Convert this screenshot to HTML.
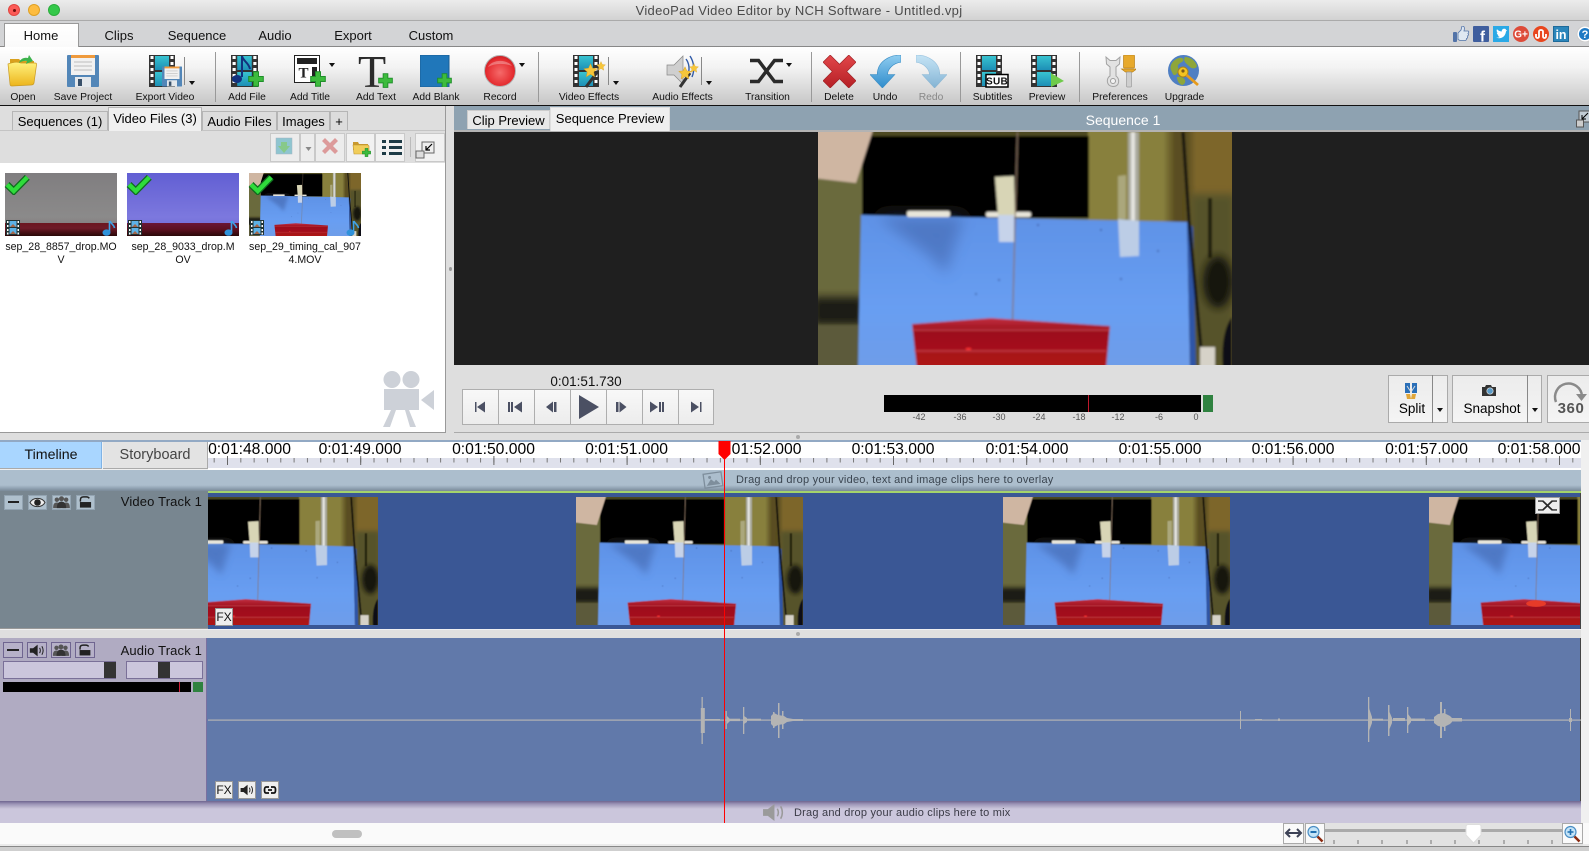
<!DOCTYPE html>
<html><head><meta charset="utf-8"><title>VideoPad Video Editor</title>
<style>
html,body{margin:0;padding:0;width:1589px;height:851px;overflow:hidden;background:#dedede;font-family:"Liberation Sans",sans-serif;color:#000}
div,svg,span{position:absolute;box-sizing:border-box}
svg{overflow:hidden}
.t{white-space:nowrap;transform:translateX(-50%);text-align:center}
.tb{top:92px;font-size:10.3px;line-height:12px;color:#111}
.mt{top:28px;font-size:13px;line-height:16px;color:#111}
.sep{top:52px;width:1px;height:50px;background:#999}
.arr{width:0;height:0;border-left:3.5px solid transparent;border-right:3.5px solid transparent;border-top:4px solid #111}
.lt{top:111px;height:19px;background:#dcdcdc;border:1px solid #b5b5b5;border-bottom:0;font-size:13px;line-height:19px;text-align:center;white-space:nowrap}
.fn{font-size:10.6px;line-height:13px;text-align:center;width:124px;top:241px;color:#111}
.tm{top:441px;font-size:15.7px;line-height:18px;color:#000}
.mtk{top:411px;font-size:9px;line-height:12px;color:#555}
.vb{top:495px;width:19px;height:15px;background:#afc0cd;border:1px solid #93a4b2}
.ab{top:642px;width:20px;height:16px;background:#b6b1c8;border:1px solid #6f6590}
.tbtn{top:133px;height:29px;border:1px solid #c9c9c9;background:#ececec}
.sl{top:661px;height:18px;background:#cbc6dc;border:1px solid #7a7098}
.small{background:#eee;border:1px solid #999;font-size:12px;line-height:16px;text-align:center;color:#111}
</style></head><body>
<svg width="0" height="0" style="left:0;top:0">
<defs>
<linearGradient id="teal" x1="0" y1="0" x2="0" y2="1"><stop offset="0" stop-color="#38c3d0"/><stop offset="1" stop-color="#1d8fb6"/></linearGradient>
<linearGradient id="bl" x1="0" y1="0" x2="0" y2="1"><stop offset="0" stop-color="#5f92e6"/><stop offset=".6" stop-color="#689ef2"/><stop offset="1" stop-color="#6f9de8"/></linearGradient>
<linearGradient id="rb" x1="0" y1="0" x2="0" y2="1"><stop offset="0" stop-color="#c23040"/><stop offset=".25" stop-color="#9c0f1c"/><stop offset="1" stop-color="#b01418"/></linearGradient>
<linearGradient id="rr" x1="0" y1="0" x2="1" y2="0"><stop offset="0" stop-color="#88803e"/><stop offset=".5" stop-color="#88803e"/><stop offset=".58" stop-color="#5a4e20"/><stop offset=".66" stop-color="#5a4e20"/><stop offset=".72" stop-color="#7d662c"/><stop offset="1" stop-color="#7d662c"/></linearGradient>
<linearGradient id="yl" x1="0" y1="0" x2="0" y2="1"><stop offset="0" stop-color="#fff27e"/><stop offset="1" stop-color="#ecb41c"/></linearGradient>
<linearGradient id="red" x1="0" y1="0" x2="0" y2="1"><stop offset="0" stop-color="#e2474a"/><stop offset="1" stop-color="#b51f25"/></linearGradient>
<linearGradient id="blu" x1="0" y1="0" x2="0" y2="1"><stop offset="0" stop-color="#8fcdf0"/><stop offset="1" stop-color="#2f8ccc"/></linearGradient>
<radialGradient id="rec" cx=".5" cy=".55" r=".55"><stop offset="0" stop-color="#f56a6a"/><stop offset=".8" stop-color="#e42b2f"/><stop offset="1" stop-color="#c72025"/></radialGradient>
<filter id="bf" x="-5%" y="-5%" width="110%" height="110%"><feGaussianBlur stdDeviation="1"/></filter>
<filter id="bs" x="-30%" y="-30%" width="160%" height="160%"><feGaussianBlur stdDeviation="7"/></filter>
<filter id="bm" x="-30%" y="-30%" width="160%" height="160%"><feGaussianBlur stdDeviation="4"/></filter>
<symbol id="ph" viewBox="0 0 414 233" preserveAspectRatio="none">
<g filter="url(#bf)">
<rect x="-5" y="-5" width="424" height="243" fill="#6b6a3c"/>
<rect x="270" y="-5" width="150" height="243" fill="url(#rr)"/>
<rect x="372" y="62" width="45" height="176" fill="#56532c" filter="url(#bm)"/>
<rect x="-5" y="165" width="50" height="28" fill="#1c1c12" filter="url(#bm)"/>
<rect x="-5" y="193" width="50" height="45" fill="#5c5a3a"/>
<rect x="45" y="-5" width="225" height="9" fill="#4d4822"/>
<rect x="44" y="4" width="227" height="82" fill="#060503"/>
<polygon points="-5,-5 56,-5 38,51 -5,46" fill="#cfb6a2"/>
<rect x="310" y="0" width="11" height="90" fill="#a9a99c"/><rect x="313" y="0" width="4" height="90" fill="#e4e4e0"/>
<rect x="390" y="66" width="4" height="60" fill="#22200f"/>
<ellipse cx="400" cy="150" rx="15" ry="26" fill="#17160c" filter="url(#bm)"/>
<polygon points="43,83 369,90 372,238 40,238" fill="url(#bl)"/>
<polygon points="369,90 375,95 378,238 372,238" fill="#2e55a6"/>
<polygon points="60,85 145,85 128,142 113,125" fill="#3f62a8" opacity=".55" filter="url(#bs)"/>
<rect x="89" y="79" width="43" height="6" rx="2" fill="#e9e6da"/><rect x="168" y="80" width="45" height="5" rx="2" fill="#e9e6da"/>
<polygon points="177,45 196,44 197,83 180,83" fill="#d8d5b6"/><polygon points="180,83 196,83 196,110 181,110" fill="#c6d3ea"/>
<polygon points="300,44 308,43 308,87 300,87" fill="#aba77b"/><polygon points="300,87 321,89 321,124 302,125" fill="#bccde6"/>
<path d="M365 0 L371 88 L385 238" stroke="#0a0a0a" stroke-width="3" fill="none"/>
<path d="M199.500 0 L194.500 191" stroke="#85705f" stroke-width="1.200" fill="none"/>
<g fill="#3a5aa0"><circle cx="220" cy="93" r="1"/><circle cx="283" cy="98" r="1"/><circle cx="340" cy="119" r="1"/><circle cx="303" cy="147" r="1"/><circle cx="181" cy="148" r="1"/><circle cx="158" cy="162" r="1"/></g>
<path d="M414 185 C406 195 403 215 405 238 H414z" fill="#0e0e12"/>
<rect x="382" y="215" width="15" height="23" fill="#d6d2c8"/>
<polygon points="94,192 173,186 292,194 288,238 99,238" fill="url(#rb)"/>
<path d="M94 198 L292 198 M96 219 L288 219" stroke="#d2565a" stroke-width="1.300" opacity=".7"/>
<rect x="148" y="216" width="5" height="2" fill="#ff3030"/>
</g></symbol>
<symbol id="film" viewBox="0 0 26 32" preserveAspectRatio="none">
<rect width="26" height="32" fill="#333"/>
<path d="M1.500 1h3v3h-3zM1.500 7h3v3h-3zM1.500 13h3v3h-3zM1.500 19h3v3h-3zM1.500 25h3v3h-3zM21.500 1h3v3h-3zM21.500 7h3v3h-3zM21.500 13h3v3h-3zM21.500 19h3v3h-3zM21.500 25h3v3h-3z" fill="#fff"/>
<rect x="6" y="1" width="14" height="14" fill="url(#teal)"/><rect x="6" y="17" width="14" height="14" fill="url(#teal)"/>
</symbol>
<symbol id="plus" viewBox="0 0 16 16"><path d="M5.500 .7h5v4.800h4.800v5h-4.800v4.800h-5v-4.800H.7v-5h4.800z" fill="#3dbb3d" stroke="#1f8f2a"/></symbol>
<symbol id="floppy" viewBox="0 0 32 32"><rect width="32" height="32" rx="1" fill="#5286b8"/><rect x="4" y="0" width="24" height="20" fill="#f1f1f1"/><rect x="4" y="0" width="24" height="3" fill="#ef9a3c"/><path d="M7 7h18M7 11h18M7 15h18" stroke="#bdbdbd"/><rect x="8" y="22" width="16" height="10" fill="#e4e8ec"/><rect x="11" y="24" width="4" height="7" fill="#38506a"/></symbol>
<symbol id="star" viewBox="0 0 20 20"><polygon points="10,1 12.700,7 19,7.600 14.300,12 15.600,18.500 10,15 4.400,18.500 5.700,12 1,7.600 7.300,7" fill="#f6c63a" stroke="#d59a1c" stroke-width=".6"/></symbol>
<symbol id="spk" viewBox="0 0 24 20"><path d="M1 6.500h5L13 1v18L6 13.500H1z" fill="currentColor"/><path d="M16 6c1.400 2.500 1.400 5.500 0 8M19.500 3.500c2.400 4 2.400 9 0 13" stroke="currentColor" stroke-width="1.600" fill="none"/></symbol>
<symbol id="ppl" viewBox="0 0 20 14"><g fill="#555"><circle cx="5" cy="4" r="2.400"/><circle cx="15" cy="4" r="2.400"/><circle cx="10" cy="3" r="2.700"/><path d="M1 13c0-4 1-6 4-6s4 2 4 6zM11 13c0-4 1-6 4-6s4 2 4 6z"/><path d="M5 13c0-5 2-7 5-7s5 2 5 7z" fill="#333"/></g></symbol>
<symbol id="lck" viewBox="0 0 20 14"><path d="M4.500 6V4.200C4.500 2 6 1 8 1h3c1.500 0 2.500.7 3 1.600" stroke="#222" stroke-width="1.600" fill="none"/><rect x="4" y="6.500" width="12" height="6" fill="#222"/></symbol>
<symbol id="xf" viewBox="0 0 33 26" preserveAspectRatio="none"><path d="M0 2.500h8.500L24.500 23.500H33M0 23.500h8.500L24.500 2.500H33" stroke="#2a2a2a" stroke-width="3.500" fill="none"/></symbol>
<symbol id="nt" viewBox="0 0 14 16"><path d="M7.500 1v11" stroke="#3fa2e6" stroke-width="1.600" fill="none"/><path d="M8 1c1 3 4 3.500 4.500 7" stroke="#3fa2e6" stroke-width="1.600" fill="none"/><ellipse cx="4.500" cy="12.600" rx="4" ry="3.200" fill="#2f92da"/></symbol>
<symbol id="mf" viewBox="0 0 14 15"><rect width="14" height="15" fill="#233"/><path d="M1 1h1.500v2H1zM1 5h1.500v2H1zM1 9h1.500v2H1zM1 12.500h1.500v2H1zM11.500 1H13v2h-1.500zM11.500 5H13v2h-1.500zM11.500 9H13v2h-1.500zM11.500 12.500H13v2h-1.500z" fill="#fff"/><rect x="3.500" y="1" width="7" height="6" fill="#5db2e6"/><rect x="3.500" y="8" width="7" height="6" fill="#5db2e6"/><path d="M4 7l3-3 3 3zM4 14l3-3 3 3z" fill="#a2664a"/></symbol>
<symbol id="ck" viewBox="0 0 24 20"><path d="M2.800 10.500L9 16.500L21.500 3.800" stroke="#106b1e" stroke-width="6.400" fill="none"/><path d="M2.800 10.500L9 16.500L21.500 3.800" stroke="#2fdc3b" stroke-width="4" fill="none"/></symbol>
<pattern id="minor" patternUnits="userSpaceOnUse" x="5.680" y="0" width="13.320" height="30"><rect x="0" y="16" width="1" height="4.500" fill="#777"/></pattern>
<pattern id="major" patternUnits="userSpaceOnUse" x="19" y="0" width="133.200" height="30"><rect x="0" y="14" width="1" height="9" fill="#666"/></pattern>
</defs></svg>

<!-- title bar -->
<div style="left:0;top:0;width:1589px;height:21px;background:linear-gradient(#ececec,#d2d2d2);border-bottom:1px solid #aaa"></div>
<div style="left:8px;top:4px;width:12px;height:12px;border-radius:50%;background:#fc5b57;border:1px solid #e14640"></div>
<div style="left:12.500px;top:8.500px;width:3px;height:3px;border-radius:50%;background:#6e0f0c"></div>
<div style="left:28px;top:4px;width:12px;height:12px;border-radius:50%;background:#fdbc40;border:1px solid #dfa023"></div>
<div style="left:48px;top:4px;width:12px;height:12px;border-radius:50%;background:#34c84a;border:1px solid #2aad3b"></div>
<div class="t" style="left:799px;top:3px;font-size:13px;line-height:15px;color:#4a4a4a;letter-spacing:.32px">VideoPad Video Editor by NCH Software - Untitled.vpj</div>

<!-- menu row -->
<div style="left:0;top:21px;width:1589px;height:26px;background:#d3d4d6;border-bottom:1px solid #888"></div>
<div style="left:4px;top:23px;width:75px;height:25px;background:linear-gradient(#fff,#fafafa);border:1px solid #999;border-bottom:0"></div>
<div class="t mt" style="left:41px">Home</div><div class="t mt" style="left:119px">Clips</div><div class="t mt" style="left:197px">Sequence</div><div class="t mt" style="left:275px">Audio</div><div class="t mt" style="left:353px">Export</div><div class="t mt" style="left:431px">Custom</div>

<!-- social -->
<svg style="left:1453px;top:26px" width="136" height="16" viewBox="0 0 136 16">
<rect x="0" y="6" width="4" height="10" rx="1" fill="#5273a8"/><path d="M5 7l3-3 1-4c2 0 3 1 2 5h4c1 0 1 2 0 2.500 1 1 0 2.500-.5 2.500.5 1 0 2.500-1 2.500 0 1-.5 2-1.500 2H7l-2-1z" fill="#dfe8f2" stroke="#5273a8" stroke-width=".8"/>
<rect x="20" y="0" width="16" height="16" rx="1" fill="#3f5e9e"/><text x="27" y="15.500" font-size="15" font-weight="bold" font-family="Liberation Sans" fill="#fff">f</text>
<rect x="40" y="0" width="16" height="16" fill="#2aa9e6"/><path d="M43 11.500c3 1.500 9 1 10-6l1.200-1.500-1.500.3c.5-1 .2-1.500-1.200-1.500-1.500-.3-3 1-2.700 2.700-2 0-3.500-.8-4.800-2.200-.8 1.500-.2 2.700.8 3.500l-1-.2c0 1.300.8 2.200 2 2.600l-1 .1c.3 1 1 1.500 2 1.600-1 .7-2.400 1-3.800.6z" fill="#fff"/>
<circle cx="68" cy="8" r="8" fill="#dd4b39"/><text x="68" y="11.500" text-anchor="middle" font-size="10" font-weight="bold" font-family="Liberation Sans" fill="#fff">G+</text>
<circle cx="88" cy="8" r="8" fill="#e8461e"/><path d="M83 8v2.500c0 2 3 2 3 0V5.500c0-2 4-2 4 0V10.500c0 2 3 2 3 0V8" stroke="#fff" stroke-width="1.800" fill="none"/>
<rect x="100.500" y=".5" width="15" height="15" fill="#2b86bb" stroke="#1e6a9a"/><text x="108" y="13" text-anchor="middle" font-size="12.500" font-weight="bold" font-family="Liberation Sans" fill="#fff">in</text>
<circle cx="132" cy="8" r="8" fill="#fff" stroke="#ccc"/><circle cx="132" cy="8" r="6" fill="#1f7ac4"/><text x="132" y="12" text-anchor="middle" font-size="11" font-weight="bold" font-family="Liberation Sans" fill="#fff">?</text>
</svg>

<!-- toolbar -->
<div style="left:0;top:47px;width:1589px;height:59px;background:linear-gradient(#fff 0%,#f3f3f3 35%,#c6c6c6 100%);border-bottom:1px solid #111"></div>
<div class="sep" style="left:215px"></div><div class="sep" style="left:538px"></div><div class="sep" style="left:811px"></div><div class="sep" style="left:960px"></div><div class="sep" style="left:1079px"></div>

<svg style="left:7px;top:53px" width="31" height="34" viewBox="0 0 31 34"><path d="M3 6H12L14 8H27V15H3z" fill="#d9a11e"/><path d="M1 11Q9 8 14 10H28Q30 10 29.500 12L27 30Q26.500 32 24 32L5 33Q3 33 3 31z" fill="url(#yl)" stroke="#c99a22" stroke-width=".7"/><path d="M12 10c1-4 5-6 9-5l1-3 4 6-7 3 1-3c-3-.5-6 .5-8 2z" fill="#3cb24c"/></svg>
<svg style="left:67px;top:55px" width="32" height="32"><use href="#floppy" width="32" height="32"/></svg>
<svg style="left:149px;top:55px" width="33" height="33"><use href="#film" width="26" height="32"/><use href="#floppy" x="13" y="11" width="20" height="21"/></svg>
<div style="left:184px;top:57px;width:1px;height:28px;background:#888"></div><div class="arr" style="left:188.500px;top:81px"></div>
<svg style="left:231px;top:55px" width="33" height="32"><use href="#film" width="27" height="32"/><path d="M11 1v21" stroke="#12317e" stroke-width="2" fill="none"/><path d="M11 1c1 5 7 7 8 13" stroke="#12317e" stroke-width="2" fill="none"/><ellipse cx="6" cy="24" rx="5" ry="4" fill="#12317e"/><use href="#plus" x="17" y="16" width="16" height="16"/></svg>
<svg style="left:294px;top:55px" width="33" height="32"><rect x=".5" y=".5" width="25" height="27" fill="#fff" stroke="#222"/><rect x="3" y="3" width="20" height="6" fill="#222"/><rect x="18" y="12" width="5" height="13" fill="#222"/><text x="9.500" y="22.500" text-anchor="middle" font-size="15" font-weight="bold" font-family="Liberation Serif" fill="#222">T</text><use href="#plus" x="16" y="16" width="16" height="16"/></svg>
<div class="arr" style="left:329px;top:63px"></div>
<svg style="left:358px;top:51px" width="35" height="38"><text x="14" y="36" text-anchor="middle" font-size="46" font-family="Liberation Serif" fill="#2b2b2b">T</text><use href="#plus" x="20" y="22" width="15" height="15"/></svg>
<svg style="left:420px;top:55px" width="33" height="32"><rect width="29" height="32" fill="#2077ba" stroke="#1a5f96"/><use href="#plus" x="17" y="18" width="15" height="15"/></svg>
<svg style="left:484px;top:55px" width="33" height="33"><circle cx="16" cy="16" r="15.500" fill="url(#rec)" stroke="#b5b5b5"/><path d="M4 12C7 5 22 3 28 11C20 8 11 8 4 12z" fill="#fff" opacity=".3"/></svg>
<div class="arr" style="left:519px;top:63px"></div>

<svg style="left:573px;top:55px" width="34" height="33"><use href="#film" width="26" height="32"/><path d="M13 32L25 16" stroke="#333" stroke-width="3"/><use href="#star" x="10" y="8" width="15" height="15"/><use href="#star" x="23" y="6" width="10" height="10"/></svg>
<div style="left:608px;top:57px;width:1px;height:28px;background:#888"></div><div class="arr" style="left:612.500px;top:81px"></div>
<svg style="left:666px;top:55px" width="34" height="33" color="#b9b9b9"><path d="M1 10h7L17 1v28L8 20H1z" fill="#cfcfcf" stroke="#888" stroke-width=".7"/><path d="M20 4c3 4 4 10 2 15M24 1c4 6 5 14 2 21" stroke="#2f5aa8" stroke-width="1.400" fill="none"/><path d="M14 32L24 18" stroke="#333" stroke-width="3"/><use href="#star" x="12" y="11" width="14" height="14"/><use href="#star" x="23" y="8" width="10" height="10"/></svg>
<div style="left:701px;top:57px;width:1px;height:28px;background:#888"></div><div class="arr" style="left:705.500px;top:81px"></div>
<svg style="left:750px;top:58px" width="33" height="26"><use href="#xf" width="33" height="26"/></svg>
<div class="arr" style="left:786px;top:63px"></div>

<svg style="left:823px;top:55px" width="33" height="33" viewBox="0 0 32 32"><path d="M7 0l9 9 9-9 7 7-9 9 9 9-7 7-9-9-9 9-7-7 9-9-9-9z" fill="url(#red)" stroke="#9d1e22" stroke-width=".6"/></svg>
<svg style="left:870px;top:55px" width="31" height="33" viewBox="0 0 30 32"><path d="M30 0C18 0 7 7 7 19H0L12 32 24 19H17C17 14 22 8 30 7z" fill="url(#blu)" stroke="#3b8dc4" stroke-width=".6"/></svg>
<svg style="left:916px;top:55px" width="31" height="33" viewBox="0 0 30 32" opacity=".5"><g transform="matrix(-1 0 0 1 30 0)"><path d="M30 0C18 0 7 7 7 19H0L12 32 24 19H17C17 14 22 8 30 7z" fill="url(#blu)" stroke="#3b8dc4" stroke-width=".6"/></g></svg>
<svg style="left:976px;top:55px" width="33" height="33"><use href="#film" width="26" height="32"/><rect x="10" y="19.500" width="22" height="12.500" fill="#fff" stroke="#000" stroke-width="1.500"/><text x="21" y="29.500" text-anchor="middle" font-size="10" font-weight="bold" font-family="Liberation Sans" fill="#111" letter-spacing=".3">SUB</text></svg>
<svg style="left:1031px;top:55px" width="33" height="33"><use href="#film" width="26" height="32"/><polygon points="20,18 33,26 20,32" fill="#6fcb4b"/></svg>
<svg style="left:1105px;top:55px" width="31" height="33" viewBox="0 0 31 33"><path d="M1 2l.5 7 3.500 3v9c-4 2-4 10 3 10.500 7 0 7-8 3-10.500V12l3.500-3 .5-7-4 3.500H5z" fill="#e2e2e2" stroke="#a2a2a2"/><circle cx="8" cy="26" r="2.500" fill="#f4f4f4" stroke="#9c9c9c"/><rect x="18.500" y="0" width="11" height="13" rx="1" fill="#e7a92c" stroke="#b9821b" stroke-width=".7"/><path d="M16.500 14h15l-4 3h-7z" fill="#e7a92c" stroke="#b9821b" stroke-width=".7"/><rect x="21.500" y="17" width="5" height="15" rx="1" fill="#cfcfcf" stroke="#9c9c9c" stroke-width=".7"/></svg>
<svg style="left:1168px;top:55px" width="32" height="33" viewBox="0 0 32 33"><circle cx="15.500" cy="15.500" r="15.500" fill="#4f7fc3"/><path d="M3 15C1 10 6 4 11 3c4-1 6 2 3 4-2 1-5 3-4 5 1 3-1 9-4 8-1 0-2-3-3-5zM17 2c5 0 10 3 12 9-1 3-5 3-7 1-3-3-8-6-5-10zM9 22c4-1 7 1 8 3s-1 5-3 5c-3-1-5-4-5-8z" fill="#8ea63a"/><circle cx="15" cy="17" r="5" fill="#f3c321" stroke="#a9821a"/><circle cx="15" cy="16" r="1.600" fill="#7a5a18"/><path d="M18.500 20L30 30" stroke="#e59a1c" stroke-width="2.800"/></svg>

<div class="t tb" style="left:23px">Open</div><div class="t tb" style="left:83px">Save Project</div><div class="t tb" style="left:165px">Export Video</div><div class="t tb" style="left:247px">Add File</div><div class="t tb" style="left:310px">Add Title</div><div class="t tb" style="left:376px">Add Text</div><div class="t tb" style="left:436px">Add Blank</div><div class="t tb" style="left:500px">Record</div><div class="t tb" style="left:589px">Video Effects</div><div class="t tb" style="left:682.500px">Audio Effects</div><div class="t tb" style="left:767.500px">Transition</div><div class="t tb" style="left:839px">Delete</div><div class="t tb" style="left:885px">Undo</div><div class="t tb" style="left:931px;color:#888">Redo</div><div class="t tb" style="left:992.500px">Subtitles</div><div class="t tb" style="left:1047px">Preview</div><div class="t tb" style="left:1120px">Preferences</div><div class="t tb" style="left:1184.500px">Upgrade</div>

<!-- left panel -->
<div style="left:0;top:106px;width:446px;height:327px;background:#dedede;border-right:1px solid #999;border-bottom:1px solid #999"></div>
<div style="left:0;top:130px;width:445px;height:1px;background:#c4c4c4"></div>
<div class="lt" style="left:12px;width:96px">Sequences (1)</div>
<div class="lt" style="left:108px;width:94px;top:107px;height:24px;background:#f0f0f0;z-index:2;line-height:22px">Video Files (3)</div>
<div class="lt" style="left:202px;width:75px">Audio Files</div>
<div class="lt" style="left:277px;width:53px">Images</div>
<div class="lt" style="left:330px;width:18px">+</div>
<div class="tbtn" style="left:270px;width:30px"></div><div class="tbtn" style="left:300px;width:15px"></div><div class="tbtn" style="left:315px;width:30px"></div>
<div class="tbtn" style="left:346px;width:29px;background:#f1f1f1"></div><div class="tbtn" style="left:375px;width:30px;background:#f1f1f1"></div>
<div style="left:410px;top:137px;width:1px;height:20px;background:#bbb"></div>
<div class="tbtn" style="left:415px;width:30px;background:#f1f1f1"></div>
<svg style="left:270px;top:133px" width="175" height="29">
<rect x="6" y="5" width="16" height="16" fill="#7fbfcc" stroke="#9ab" stroke-width=".5" opacity=".85"/><path d="M11 13v-4h6v4h3l-6 7-6-7z" fill="#87c98a"/>
<path d="M35.500 14h6l-3 4z" fill="#888"/>
<path d="M52 8l3-3 5 5 5-5 3 3-5 5 5 5-3 3-5-5-5 5-3-3 5-5z" fill="#dc9a9a"/>
<path d="M83 9h5l1 2h9v6H83z" fill="#c9992e"/><path d="M83 12h15l1 1v8H84z" fill="#f1cd5a" stroke="#bf9530" stroke-width=".6"/><use href="#plus" x="92" y="15" width="9" height="9"/>
<path d="M112 7h4v3h-4zM119 7h13v3h-13zM112 13h4v3h-4zM119 13h13v3h-13zM112 19h4v3h-4zM119 19h13v3h-13z" fill="#1d3b46"/>
<rect x="152" y="9" width="12" height="11" fill="#eee" stroke="#666"/><rect x="146" y="18" width="8" height="7" fill="#ddd" stroke="#666"/><path d="M162 11l-6 6M156 13v4h4" stroke="#000" stroke-width="1.200" fill="none"/>
</svg>
<div style="left:0;top:163px;width:445px;height:269px;background:#fff"></div>

<div style="left:5px;top:173px;width:112px;height:63px;background:linear-gradient(#807e80,#8b8a8a 70%,#7a7074)"></div>
<div style="left:5px;top:223px;width:112px;height:13px;background:linear-gradient(#6b1620,#6e1a28 40%,#2a0808)"></div>
<div style="left:127px;top:173px;width:112px;height:63px;background:linear-gradient(#625fd3,#7c78de 70%,#6d68d6)"></div>
<div style="left:127px;top:223px;width:112px;height:13px;background:linear-gradient(#6a1636,#5c1020 50%,#2a0808)"></div>
<svg style="left:249px;top:173px" width="112" height="63"><use href="#ph" width="112" height="63"/></svg>
<svg style="left:0;top:170px" width="370" height="70">
<use href="#ck" x="4" y="3" width="26" height="22"/><use href="#ck" x="126" y="3" width="26" height="22"/><use href="#ck" x="248" y="3" width="26" height="22"/>
<use href="#mf" x="6" y="50" width="14" height="15"/><use href="#mf" x="128" y="50" width="14" height="15"/><use href="#mf" x="250" y="50" width="14" height="15"/>
<use href="#nt" x="102" y="50" width="14" height="16"/><use href="#nt" x="224" y="50" width="14" height="16"/><use href="#nt" x="346" y="50" width="14" height="16"/>
</svg>
<div class="fn" style="left:-1px">sep_28_8857_drop.MO<br>V</div>
<div class="fn" style="left:121px">sep_28_9033_drop.M<br>OV</div>
<div class="fn" style="left:243px">sep_29_timing_cal_907<br>4.MOV</div>
<svg style="left:383px;top:371px" width="51" height="56" viewBox="0 0 51 56" fill="#cdd1d8"><circle cx="9" cy="8.500" r="8.500"/><circle cx="28" cy="8.500" r="8.500"/><rect x="1" y="18" width="35" height="21"/><polygon points="38,29 51,19 51,39"/><polygon points="8,39 13,39 7,56 0,56"/><polygon points="22,39 26,39 33,56 27,56"/></svg>
<div style="left:449px;top:267px;width:3px;height:4px;background:#999;border-radius:50%"></div>

<!-- preview -->
<div style="left:454px;top:106px;width:1135px;height:24px;background:#8ea2b1"></div>
<div style="left:454px;top:130px;width:1135px;height:2px;background:#b3b3b3"></div>
<div class="lt" style="left:467px;width:83px;top:110px;background:#e8e8e8;border-color:#ccc;font-size:13px">Clip Preview</div>
<div class="lt" style="left:550px;width:120px;top:107px;height:24px;background:#efefef;border-color:#ddd;font-size:13px;line-height:22px">Sequence Preview</div>
<div class="t" style="left:1123px;top:112px;font-size:14px;line-height:16px;color:#fff">Sequence 1</div>
<svg style="left:1576px;top:110px" width="13" height="19"><rect x="3" y="1" width="12" height="11" fill="#c2ccd4" stroke="#555"/><rect x=".5" y="10" width="7" height="7" fill="#ccc" stroke="#555"/><path d="M12 3l-6 6M6 5v4h4" stroke="#000" fill="none"/></svg>
<div style="left:454px;top:132px;width:1135px;height:233px;background:#1f1f1f"></div>
<svg style="left:818px;top:132px" width="414" height="233"><use href="#ph" width="414" height="233"/></svg>

<!-- controls -->
<div style="left:454px;top:365px;width:1135px;height:68px;background:#dedede;border-bottom:1px solid #aaa"></div>
<div class="t" style="left:586px;top:374px;font-size:13.500px;line-height:16px;color:#111">0:01:51.730</div>
<svg style="left:462px;top:389px" width="253" height="37" viewBox="0 0 253 37">
<defs><linearGradient id="bg" x1="0" y1="0" x2="0" y2="1"><stop offset="0" stop-color="#f8f8f8"/><stop offset="1" stop-color="#ececec"/></linearGradient></defs>
<g fill="url(#bg)" stroke="#aeaeae"><rect x=".5" y=".5" width="36" height="35"/><rect x="36.500" y=".5" width="36" height="35"/><rect x="72.500" y=".5" width="36" height="35"/><rect x="108.500" y=".5" width="36" height="35"/><rect x="144.500" y=".5" width="36" height="35"/><rect x="180.500" y=".5" width="36" height="35"/><rect x="216.500" y=".5" width="35" height="35"/></g>
<g fill="#4b5063">
<path d="M13 13h1.500v10H13zM15 18l8-5.500v11z"/>
<path d="M46 13h2v10h-2zM49 13h2v10h-2zM52 18l8-5.500v11z"/>
<path d="M84 18l7-5.500v11zM92 13h2.500v10H92z"/>
<path d="M117 6l20 12-20 12z"/>
<path d="M154 13h2.500v10H154zM157.500 12.500l7 5.500-7 5.500z"/>
<path d="M188 12.500l8 5.500-8 5.500zM197 13h2v10h-2zM200 13h2v10h-2z"/>
<path d="M229 12.500l8 5.500-8 5.500zM238 13h1.500v10H238z"/>
</g></svg>
<div style="left:884px;top:395px;width:317px;height:17px;background:#000"></div>
<div style="left:1088px;top:395px;width:1px;height:17px;background:#c0182c"></div>
<div style="left:1203px;top:395px;width:10px;height:17px;background:#2f8240"></div>
<div class="t mtk" style="left:919px">-42</div><div class="t mtk" style="left:960px">-36</div><div class="t mtk" style="left:999px">-30</div><div class="t mtk" style="left:1039px">-24</div><div class="t mtk" style="left:1079px">-18</div><div class="t mtk" style="left:1118px">-12</div><div class="t mtk" style="left:1159px">-6</div><div class="t mtk" style="left:1196px">0</div>

<div style="left:1388px;top:375px;width:60px;height:48px;background:linear-gradient(#ececec,#f4f4f4);border:1px solid #aaa"></div><div style="left:1432px;top:375px;width:1px;height:48px;background:#888"></div>
<div class="t" style="left:1412px;top:401px;font-size:13.500px;line-height:16px">Split</div><div class="arr" style="left:1436.500px;top:408px"></div>
<svg style="left:1404px;top:382px" width="14" height="18"><rect x="1" y="1" width="5" height="10" fill="#2a6fb8"/><rect x="8" y="1" width="5" height="10" fill="#2a6fb8"/><path d="M3 4l4 6 4-6" stroke="#ddd" fill="none"/><path d="M2 12h4l1 5H3zM12 12H8l-1 5h4z" fill="#e0a63a"/></svg>
<div style="left:1452px;top:375px;width:90px;height:48px;background:linear-gradient(#ececec,#f4f4f4);border:1px solid #aaa"></div><div style="left:1527px;top:375px;width:1px;height:48px;background:#888"></div>
<div class="t" style="left:1492px;top:401px;font-size:13.500px;line-height:16px">Snapshot</div><div class="arr" style="left:1531.500px;top:408px"></div>
<svg style="left:1481px;top:384px" width="16" height="13"><path d="M1 3h3l1-2h5l1 2h4v9H1z" fill="#333"/><circle cx="9" cy="7" r="3.200" fill="#5a9bc8" stroke="#ddd" stroke-width=".7"/></svg>
<div style="left:1547px;top:375px;width:44px;height:48px;background:linear-gradient(#ececec,#f4f4f4);border:1px solid #aaa"></div>
<svg style="left:1552px;top:381px" width="37" height="26"><path d="M4 21A13.500 13.500 0 1 1 30 15" stroke="#8a8a8a" stroke-width="2.500" fill="none"/><path d="M24 13h11l-5.500 7z" fill="#8a8a8a"/></svg>
<div class="t" style="left:1571px;top:401px;font-size:15px;font-weight:bold;line-height:16px;color:#555;letter-spacing:.6px">360</div>
<div style="left:796px;top:435px;width:4px;height:4px;background:#aaa;border-radius:50%"></div>

<!-- timeline -->
<div style="left:0;top:440px;width:1589px;height:411px;background:#f0f0f0"></div>
<div style="left:0;top:440px;width:1581px;height:2px;background:#92a9c4"></div>
<div style="left:0;top:442px;width:102px;height:27px;background:#a9d6ff;border-right:1px solid #7fb3e6;border-bottom:1px solid #aaa"></div>
<div class="t" style="left:51px;top:447px;font-size:14.200px;line-height:16px;color:#111">Timeline</div>
<div style="left:103px;top:442px;width:105px;height:27px;background:#e3e3e3;border-bottom:1px solid #aaa;border-right:1px solid #aaa"></div>
<div class="t" style="left:155px;top:447px;font-size:14.500px;line-height:16px;color:#444">Storyboard</div>
<div style="left:208px;top:442px;width:1373px;height:16px;background:#fff"></div>
<div style="left:208px;top:458px;width:1373px;height:10px;background:#dfe1ec"></div>
<div style="left:208px;top:468px;width:1373px;height:2px;background:#fff"></div>
<svg style="left:208px;top:442px" width="1373" height="26"><rect width="1373" height="26" fill="url(#minor)"/><rect width="1373" height="26" fill="url(#major)"/></svg>
<div class="t tm" style="left:249.500px">0:01:48.000</div><div class="t tm" style="left:360px">0:01:49.000</div><div class="t tm" style="left:493.500px">0:01:50.000</div><div class="t tm" style="left:626.500px">0:01:51.000</div><div class="t tm" style="left:760px">0:01:52.000</div><div class="t tm" style="left:893px">0:01:53.000</div><div class="t tm" style="left:1027px">0:01:54.000</div><div class="t tm" style="left:1160px">0:01:55.000</div><div class="t tm" style="left:1293px">0:01:56.000</div><div class="t tm" style="left:1426.500px">0:01:57.000</div><div class="t tm" style="left:1539px">0:01:58.000</div>

<!-- overlay track -->
<div style="left:0;top:470px;width:1581px;height:21px;background:linear-gradient(#acbecd 0,#acbecd 72%,#94a6b6 85%,#7a8a98 100%)"></div>
<svg style="left:702px;top:470px" width="22" height="20" viewBox="0 0 22 20"><g transform="rotate(-8 11 10)"><rect x="2" y="3" width="18" height="14" fill="none" stroke="#7e8e9c" stroke-width="1.300"/><path d="M4 15l5-6 3 3 2-2 4 5z" fill="#7e8e9c"/><circle cx="8" cy="7" r="1.500" fill="#7e8e9c"/></g></svg>
<div style="left:736px;top:473px;font-size:11px;line-height:14px;color:#3b4550;white-space:nowrap;letter-spacing:.23px">Drag and drop your video, text and image clips here to overlay</div>

<!-- video track -->
<div style="left:0;top:491px;width:208px;height:138px;background:#788690;border-bottom:1px solid #999"></div>
<div style="left:208px;top:491px;width:1373px;height:2px;background:#a4d36b"></div>
<div style="left:208px;top:493px;width:1373px;height:136px;background:#3a5795;border-right:1px solid #444"></div>
<div class="vb" style="left:4px"></div><div style="left:8px;top:501px;width:11px;height:2px;background:#222"></div>
<div class="vb" style="left:28px"></div><svg style="left:29px;top:496px" width="17" height="13"><path d="M1 6.500C4 1 13 1 16 6.500C13 12 4 12 1 6.500z" fill="#eee" stroke="#333"/><circle cx="8.500" cy="6.500" r="3.300" fill="#222"/></svg>
<div class="vb" style="left:52px"></div><svg style="left:52px;top:496px" width="19" height="13"><use href="#ppl" width="19" height="13"/></svg>
<div class="vb" style="left:76px"></div><svg style="left:76px;top:496px" width="19" height="13"><use href="#lck" width="19" height="13"/></svg>
<div style="right:1387px;top:494px;font-size:13px;line-height:16px;color:#111;white-space:nowrap;letter-spacing:.15px">Video Track 1</div>
<svg style="left:208px;top:497px" width="170" height="128" viewBox="104 0 310 233" preserveAspectRatio="none"><use href="#ph" width="414" height="233"/></svg>
<svg style="left:576px;top:497px" width="227" height="128"><use href="#ph" width="227" height="128"/></svg>
<svg style="left:1003px;top:497px" width="227" height="128"><use href="#ph" width="227" height="128"/></svg>
<svg style="left:1429px;top:497px" width="151" height="128" viewBox="0 0 275 233" preserveAspectRatio="none"><use href="#ph" width="414" height="233"/><ellipse cx="195" cy="194" rx="18" ry="6" fill="#e63a28"/></svg>
<div class="small" style="left:215px;top:608px;width:18px;height:18px">FX</div>
<div class="small" style="left:1535px;top:497px;width:25px;height:17px"></div>
<svg style="left:1538px;top:500px" width="19" height="11"><use href="#xf" width="19" height="11"/></svg>

<div style="left:0;top:630px;width:1581px;height:8px;background:#dfdfdf"></div>
<div style="left:796px;top:632px;width:4px;height:4px;background:#aaa;border-radius:50%"></div>

<!-- audio track -->
<div style="left:0;top:638px;width:207px;height:163px;background:#b0abc2;border-right:1px solid #7a70a0"></div>
<div style="left:207px;top:638px;width:1374px;height:163px;background:#6179aa;border-right:1px solid #444"></div>
<div class="ab" style="left:3px"></div><div style="left:7px;top:649px;width:12px;height:2px;background:#222"></div>
<div class="ab" style="left:27px"></div><svg style="left:29px;top:644px;color:#222" width="16" height="13"><use href="#spk" width="16" height="13"/></svg>
<div class="ab" style="left:51px"></div><svg style="left:52px;top:644px" width="18" height="13"><use href="#ppl" width="18" height="13"/></svg>
<div class="ab" style="left:75px"></div><svg style="left:76px;top:644px" width="18" height="13"><use href="#lck" width="18" height="13"/></svg>
<div style="right:1387px;top:643px;font-size:13px;line-height:16px;color:#111;white-space:nowrap;letter-spacing:.15px">Audio Track 1</div>
<div class="sl" style="left:3px;width:113px"></div><div style="left:104px;top:662px;width:12px;height:16px;background:#333"></div>
<div class="sl" style="left:126px;width:77px"></div><div style="left:158px;top:662px;width:12px;height:16px;background:#333"></div>
<div style="left:3px;top:682px;width:188px;height:10px;background:#000"></div><div style="left:179px;top:682px;width:1px;height:10px;background:#d0203a"></div><div style="left:193px;top:682px;width:10px;height:10px;background:#2f8240"></div>
<svg style="left:208px;top:680px" width="1373" height="80" viewBox="208 680 1373 80">
<rect x="208" y="719.500" width="1373" height="1.200" fill="#b4b4b4"/>
<g fill="#b4b4b4">
<rect x="701.500" y="697" width="1.300" height="47"/><path d="M700.800 708h4v25h-4z"/>
<rect x="705" y="719" width="15" height="1.600"/>
<rect x="725.500" y="711" width="1.300" height="18"/><path d="M727 716l3 3v2l-3 3z"/><rect x="730" y="718.700" width="10" height="2.400"/>
<rect x="743" y="707" width="1.300" height="27"/><path d="M744 716l3 2v4l-3 2z"/><rect x="747" y="718.700" width="14" height="2"/>
<path d="M771 716l3-3 4 2 6 1 3 2v4l-3 2-6 1-4 2-3-3z"/><rect x="773" y="712" width="1.500" height="16"/>
<rect x="778" y="703" width="1.500" height="35"/><rect x="782" y="711" width="1.500" height="18"/><path d="M787 718l6 1v2l-6 1z"/><rect x="793" y="719" width="10" height="2"/>
<rect x="1240" y="711" width="1" height="18"/><rect x="1255" y="719" width="7" height="1.500"/><rect x="1278" y="718.500" width="2" height="2.500"/>
<rect x="1368" y="697" width="1.300" height="45"/><path d="M1369 708l3 9v6l-3 8z"/><rect x="1372" y="718.700" width="11" height="2"/>
<rect x="1388" y="705" width="1.500" height="31"/><path d="M1389.500 712l2.500 6v5l-2.500 6z"/><rect x="1393" y="718" width="12" height="3"/>
<rect x="1407" y="707" width="1.300" height="26"/><path d="M1408 714l3 4v4l-3 4z"/><rect x="1411" y="718.500" width="14" height="2.500"/>
<path d="M1434 717l4-3 6-1 6 3 2 2v4l-2 2-6 3-6-1-4-3z"/><rect x="1440" y="702" width="2" height="36"/><rect x="1444" y="709" width="1.500" height="22"/><rect x="1452" y="718" width="10" height="3.500"/>
<rect x="1570" y="709" width="1" height="22"/><rect x="1569" y="718" width="3" height="4"/>
</g></svg>
<div class="small" style="left:215px;top:781px;width:18px;height:18px">FX</div>
<div class="small" style="left:238px;top:781px;width:18px;height:18px"></div><svg style="left:240px;top:784px;color:#222" width="14" height="12"><use href="#spk" width="14" height="12"/></svg>
<div class="small" style="left:261px;top:781px;width:18px;height:18px"></div><svg style="left:263px;top:785px" width="14" height="10"><path d="M6 2H3C1 2 1 8 3 8H6M8 2h3c2 0 2 6 0 6H8M5 5h4" stroke="#111" stroke-width="1.800" fill="none"/></svg>

<!-- mix track -->
<div style="left:0;top:801px;width:1581px;height:22px;background:linear-gradient(#6f6590 0,#9c94b6 3px,#b9b3cd 6px,#cbc6dc 8px,#cbc6dc 100%)"></div>
<svg style="left:762px;top:803px;color:#9a9a9a" width="23" height="19"><use href="#spk" width="23" height="19"/></svg>
<div style="left:794px;top:806px;font-size:11px;line-height:14px;color:#3a3a46;white-space:nowrap;letter-spacing:.22px">Drag and drop your audio clips here to mix</div>

<!-- playhead -->
<div style="left:724px;top:442px;width:1px;height:381px;background:#f00"></div>
<svg style="left:718px;top:441px" width="13" height="19"><path d="M.5 0h12v13l-6 6-6-6z" fill="#f00"/></svg>

<!-- bottom bar -->
<div style="left:0;top:823px;width:1589px;height:23px;background:#fafafa"></div>
<div style="left:0;top:844px;width:1589px;height:2px;background:#eaeaea"></div>
<div style="left:0;top:846px;width:1589px;height:1px;background:#888"></div>
<div style="left:0;top:847px;width:1589px;height:4px;background:#cfcfcf"></div>
<div style="left:332px;top:830px;width:30px;height:8px;border-radius:4px;background:#c0c0c0"></div>
<div style="left:1283px;top:823px;width:300px;height:23px;background:#e2e2e2"></div>
<div style="left:1283px;top:823px;width:21px;height:21px;background:#fafafa;border:1px solid #aaa"></div>
<svg style="left:1284px;top:826px" width="19" height="14"><path d="M2 7h15M6 3L2 7l4 4M13 3l4 4-4 4" stroke="#3d4256" stroke-width="2" fill="none"/></svg>
<div style="left:1305px;top:823px;width:20px;height:21px;background:#fafafa;border:1px solid #aaa"></div>
<svg style="left:1306px;top:824px" width="19" height="20"><circle cx="7.500" cy="8" r="5.500" fill="#c4e4f8" stroke="#4b8ec4" stroke-width="1.200"/><path d="M4.500 8h6" stroke="#1f6fb0" stroke-width="2"/><path d="M11.500 12.500l5 5" stroke="#8a2a10" stroke-width="2.500"/></svg>
<div style="left:1325px;top:829px;width:237px;height:3px;background:#aaa"></div>
<svg style="left:1325px;top:840px" width="237" height="5"><path d="M9 0v4M33 0v4M57 0v4M82 0v4M106 0v4M130 0v4M154 0v4M179 0v4M203 0v4M227 0v4" stroke="#777"/></svg>
<svg style="left:1465px;top:824px" width="17" height="20"><path d="M3 .5h11a2 2 0 0 1 2 2V11l-7.500 8L1 11V2.500a2 2 0 0 1 2-2z" fill="#fff" stroke="#ddd"/></svg>
<div style="left:1562px;top:823px;width:21px;height:21px;background:#fafafa;border:1px solid #aaa"></div>
<svg style="left:1563px;top:824px" width="19" height="20"><circle cx="7.500" cy="8" r="5.500" fill="#c4e4f8" stroke="#4b8ec4" stroke-width="1.200"/><path d="M4.500 8h6M7.500 5v6" stroke="#1f6fb0" stroke-width="1.600"/><path d="M11.500 12.500l5 5" stroke="#8a2a10" stroke-width="2.500"/></svg>
</body></html>
